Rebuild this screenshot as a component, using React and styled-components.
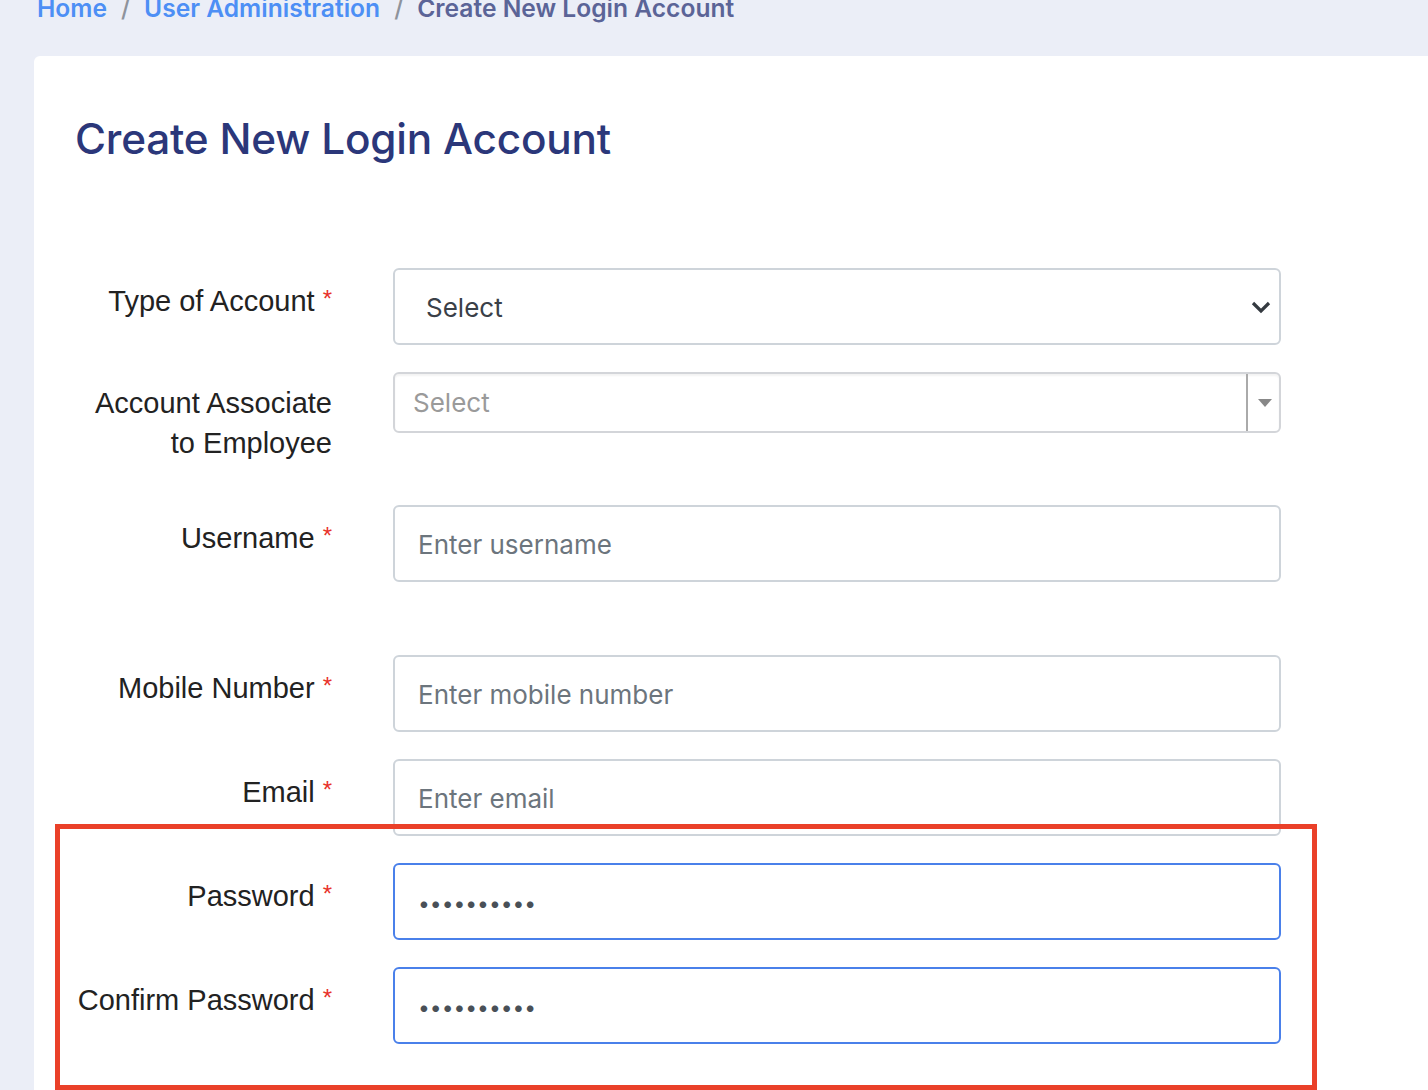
import styled, { createGlobalStyle } from "styled-components";

const GlobalStyle = createGlobalStyle`
  html, body {
    margin: 0;
    padding: 0;
    background: #ebeef7;
    overflow: hidden;
  }
  * {
    box-sizing: border-box;
  }
`;

const fields = [
  { label: "Username", placeholder: "Enter username", after: 73 },
  { label: "Mobile Number", placeholder: "Enter mobile number" },
  { label: "Email", placeholder: "Enter email" },
];

export default function App() {
  return (
    <Page>
      <GlobalStyle />
      <Breadcrumb>
        <Crumb href="#">Home</Crumb>
        <Slash>/</Slash>
        <Crumb href="#">User Administration</Crumb>
        <Slash>/</Slash>
        <Current>Create New Login Account</Current>
      </Breadcrumb>

      <Card>
        <Title>Create New Login Account</Title>

        <Form>
          <Row>
            <Label>
              Type of Account<Req>*</Req>
            </Label>
            <SelectBox>
              <span>Select</span>
              <svg width="20" height="14" viewBox="0 0 20 14">
                <path
                  d="M2 3 L10 11 L18 3"
                  fill="none"
                  stroke="#343a40"
                  strokeWidth="3.2"
                />
              </svg>
            </SelectBox>
          </Row>

          <Row>
            <Label>
              Account Associate
              <br />
              to Employee
            </Label>
            <Combo>
              <ComboText>Select</ComboText>
              <ComboArrow>
                <svg width="14" height="8" viewBox="0 0 14 8">
                  <path d="M0 0 L14 0 L7 8 Z" fill="#888" />
                </svg>
              </ComboArrow>
            </Combo>
          </Row>

          {fields.map((f) => (
            <Row key={f.label} $after={f.after}>
              <Label>
                {f.label}
                <Req>*</Req>
              </Label>
              <Input placeholder={f.placeholder} />
            </Row>
          ))}

          <Row>
            <Label>
              Password<Req>*</Req>
            </Label>
            <Input $focused type="password" defaultValue="1234567890" />
          </Row>
          <Row>
            <Label>
              Confirm Password<Req>*</Req>
            </Label>
            <Input $focused type="password" defaultValue="1234567890" />
          </Row>
        </Form>
      </Card>

      <Highlight />
    </Page>
  );
}

// Styled Components

const Page = styled.div`
  position: relative;
  height: 1090px;
  padding-left: 34px;
  overflow: hidden;
  font-family: "Liberation Sans", Arial, sans-serif;
`;

const Breadcrumb = styled.nav`
  display: flex;
  align-items: baseline;
  gap: 14px;
  margin-top: -7px;
  padding-left: 3px;
  height: 63px;
  font-family: Inter, "Noto Sans", sans-serif;
  font-size: 24.6px;
  font-weight: 600;
  line-height: 30px;
`;

const Crumb = styled.a`
  color: #4d8ff5;
  text-decoration: none;
`;

const Slash = styled.span`
  color: #8e939c;
  font-weight: 500;
`;

const Current = styled.span`
  color: #5b6497;
`;

const Card = styled.section`
  width: 1500px;
  min-height: 1100px;
  background: #ffffff;
  border-radius: 6px;
  padding: 56px 40px 40px 41px;
`;

const Title = styled.h1`
  margin: 0 0 102px 0;
  font-family: Inter, "Noto Sans", sans-serif;
  font-size: 42.3px;
  font-weight: 500;
  line-height: 54px;
  color: #2b377a;
  letter-spacing: -0.2px;
`;

const Form = styled.div`
  display: flex;
  flex-direction: column;
`;

const Row = styled.div`
  display: grid;
  grid-template-columns: 257px 888px;
  column-gap: 61px;
  align-items: start;
  margin-bottom: ${(p) => (p.$after ? p.$after : 27)}px;
`;

const Label = styled.label`
  text-align: right;
  padding: 11px 0 15px;
  font-size: 29px;
  line-height: 40px;
  color: #222222;
  white-space: nowrap;
`;

const Req = styled.span`
  color: #e8322b;
  margin-left: 8px;
  font-size: 24px;
  vertical-align: 4px;
`;

const fieldBase = `
  width: 888px;
  border-radius: 6px;
  background: #ffffff;
  font-family: Inter, "Noto Sans", sans-serif;
`;

const SelectBox = styled.div`
  ${fieldBase}
  height: 77px;
  border: 2px solid #ced4da;
  display: flex;
  align-items: center;
  justify-content: space-between;
  padding: 0 8px 0 31px;
  font-size: 26px;
  color: #3a4048;

  span {
    padding-top: 2px;
  }
`;

const Combo = styled.div`
  ${fieldBase}
  height: 61px;
  border: 2px solid #d3d5d9;
  box-shadow: inset 0 2px 2px rgba(0, 0, 0, 0.05);
  display: flex;
  align-items: stretch;
`;

const ComboText = styled.div`
  flex: 1;
  display: flex;
  align-items: center;
  padding-left: 18px;
  font-size: 26px;
  color: #9a9a9a;
  border-right: 2px solid #aaaaaa;
`;

const ComboArrow = styled.div`
  width: 31px;
  display: flex;
  align-items: center;
  justify-content: center;
  padding-left: 2px;
`;

const Input = styled.input`
  ${fieldBase}
  height: 77px;
  border: 2px solid ${(p) => (p.$focused ? "#4a80ea" : "#ced4da")};
  padding: ${(p) => (p.$focused ? "4px 23px 0" : "2px 23px 0")};
  font-size: ${(p) => (p.$focused ? "21px" : "26px")};
  color: #495057;
  outline: none;

  &::placeholder {
    color: #6c757d;
  }
`;

const Highlight = styled.div`
  position: absolute;
  left: 55px;
  top: 824px;
  width: 1262px;
  height: 266px;
  border: 5px solid #ea4029;
  pointer-events: none;
`;
